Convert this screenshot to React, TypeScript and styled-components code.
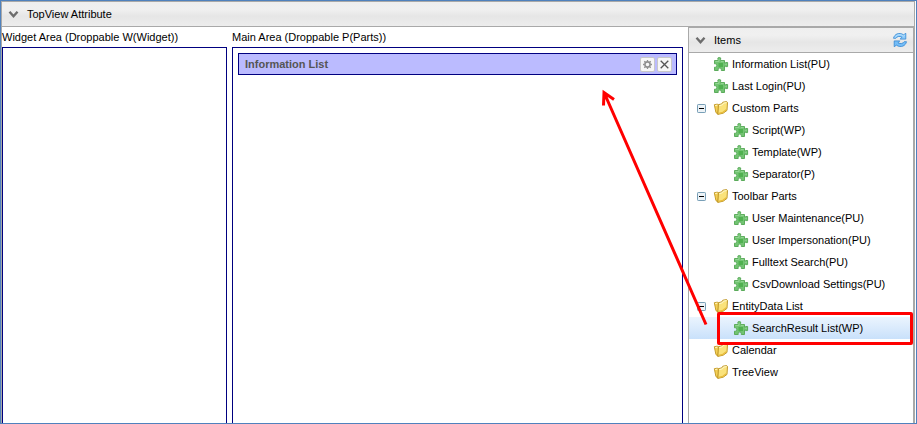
import React from 'react';
import styled, { createGlobalStyle } from 'styled-components';

const GlobalStyle = createGlobalStyle`
  * { box-sizing: border-box; }
  body { margin: 0; background: #fff; overflow: hidden; }
`;

const Screen = styled.div`
  position: relative;
  display: flex;
  flex-direction: column;
  width: 917px;
  height: 424px;
  overflow: hidden;
  border: 1px solid #4f81bd;
  background: #fff;
  font: 11px/14px 'Liberation Sans', Arial, sans-serif;
  color: #000;
`;

const Panel = styled.section`
  flex: 1;
  min-height: 0;
  display: flex;
  flex-direction: column;
  margin-right: 1px;
  border: 1px solid #a9a9a9;
  border-bottom: 0;
`;

const PanelHeader = styled.header`
  flex: none;
  display: flex;
  align-items: center;
  height: 25px;
  padding: 0 5px 0 6px;
  border-bottom: 1px solid #a9a9a9;
  background: linear-gradient(#efefef 0%, #f0f0f0 30%, #e6e6e6 60%, #ededed 100%);
`;

const Title = styled.span`
  flex: 1;
  margin-left: 8px;
`;

const Body = styled.div`
  flex: 1;
  min-height: 0;
  display: flex;
`;

const Area = styled.div<{ $width: number; $gap: number }>`
  display: flex;
  flex-direction: column;
  width: ${p => p.$width}px;
  margin-right: ${p => p.$gap}px;
  padding-top: 3px;
`;

const DropBox = styled.div`
  flex: 1;
  margin-top: 3px;
  padding: 5px;
  border: 1px solid #000080;
  border-bottom: 0;
`;

const Part = styled.div`
  display: flex;
  align-items: center;
  gap: 2px;
  height: 22px;
  padding: 0 4px 0 6px;
  border: 1px solid #000080;
  background: #bbbbff;
  color: #555;
  font-weight: bold;
`;

const PartName = styled.span`
  flex: 1;
`;

const IconButton = styled.button`
  display: grid;
  place-items: center;
  width: 15px;
  height: 15px;
  padding: 0;
  border: 1px solid #c8c8c8;
  border-radius: 2px;
  background: #f7f7f7;
`;

const ItemsPanel = styled.aside`
  display: flex;
  flex-direction: column;
  width: 226px;
  border: 1px solid #a9a9a9;
  border-bottom: 0;
`;

const Tree = styled.ul`
  margin: 0;
  padding: 0;
  list-style: none;
`;

const Row = styled.li<{ $depth: number; $selected?: boolean }>`
  display: flex;
  align-items: center;
  height: 22px;
  padding-left: ${p => 8 + p.$depth * 20}px;
  background: ${p => (p.$selected ? 'linear-gradient(#ebf4fe, #c9e1fb)' : 'none')};
`;

const ToggleSlot = styled.span`
  display: flex;
  width: 16px;
`;

const RowLabel = styled.span`
  margin-left: 3px;
  white-space: nowrap;
`;

const Highlight = styled.div`
  position: absolute;
  left: 716px;
  top: 311px;
  width: 196px;
  height: 33px;
  border: 3px solid #f00;
  border-radius: 2px;
`;

const Pointer = styled.svg`
  position: absolute;
  left: -1px;
  top: -1px;
  pointer-events: none;
`;

const Chevron = () => (
  <svg width="11" height="11" viewBox="0 0 11 11">
    <path d="M1.5 2.8 5.5 7.2 9.5 2.8" fill="none" stroke="#6c6c6c" strokeWidth="2.4" />
  </svg>
);

const Gear = () => (
  <svg width="11" height="11" viewBox="0 0 11 11" fill="none" stroke="#909090">
    <circle cx="5.5" cy="5.5" r="2.6" strokeWidth="1.6" />
    <path d="M5.5 1v1.5M5.5 8.5V10M1 5.5h1.5M8.5 5.5H10M2.3 2.3l1.1 1.1M7.6 7.6l1.1 1.1M8.7 2.3 7.6 3.4M3.4 7.6 2.3 8.7" strokeWidth="1.3" />
  </svg>
);

const Cross = () => (
  <svg width="11" height="11" viewBox="0 0 11 11">
    <path d="m1.7 1.7 7.6 7.6M9.3 1.7 1.7 9.3" stroke="#555" strokeWidth="1.3" />
  </svg>
);

const Puzzle = () => (
  <svg width="16" height="16" viewBox="0 0 16 16">
    <path
      d="M1.5 4.5H5V3.3Q4.2 1.5 6.3 1.5T7.6 3.3V4.5H11.5V7.4H12.6V6.5H14.6V10.6H12.6V9.8H11.5V14.5H8.3V13.4Q8.7 12 6.8 12T5.2 13.4V14.5H1.5V11.2H2.5Q3.8 11 3.8 9.5T2.5 7.8H1.5Z"
      fill="#72c472"
      stroke="#5bab5b"
    />
    <path d="M2.3 5.4H6V2.7M8 5.4h2.7M12.2 8.3h1.6" fill="none" stroke="#a0dda0" strokeWidth=".8" />
    <path d="M5.5 7H10v4H5.5Z" fill="#50b150" />
  </svg>
);

const Folder = () => (
  <svg width="16" height="16" viewBox="0 0 16 16" strokeLinejoin="round">
    <path d="M1.3 4.7 4.6 4.1 6 5.5 4.9 14.2 2.9 12.5Z" fill="#f3cf55" stroke="#c09520" strokeWidth=".9" />
    <path d="M5.4 4.7 9 3.8 9.8 2.2 13.6 1.6 14.5 2.4 14 10.4 10.2 13.2 4.9 14.4Z" fill="#fae27a" stroke="#b98e1e" strokeWidth=".9" />
    <path d="M6.3 5.6 9.6 4.7 10.4 3.1 13.5 2.6M2.2 5.5 4.4 5.1" stroke="#fffad2" fill="none" />
    <path d="M5.6 13.3 9.8 12.3 13.2 9.8" stroke="#e9bd3c" fill="none" strokeWidth="1.2" />
  </svg>
);

const Minus = () => (
  <svg width="9" height="9" viewBox="0 0 9 9">
    <rect x=".5" y=".5" width="8" height="8" rx=".7" fill="#edf3f7" stroke="#789fb7" />
    <path d="M2 4.5h5" stroke="#000" />
  </svg>
);

const Refresh = () => (
  <svg width="16" height="16" viewBox="0 0 16 16" strokeLinejoin="round">
    <path
      d="M1.5 6.3C2.3 2.2 7-.2 11.6 2.8L13.8 1.3V7.1H8.2L10 5.2C7.2 3.7 5 4.5 3.8 6.3Z"
      fill="#8dcbfa"
      stroke="#3486d2"
      strokeWidth=".8"
    />
    <path
      d="M14.5 9.7C13.7 13.8 9 16.2 4.4 13.2L2.2 14.7V8.9H7.8L6 10.8C8.8 12.3 11 11.5 12.2 9.7Z"
      fill="#74bdf7"
      stroke="#3486d2"
      strokeWidth=".8"
    />
    <path d="M3 5.3C5.2 2.3 8.5 2 11.5 4L13 2.8" fill="none" stroke="#c2e4fd" strokeWidth=".8" />
  </svg>
);

type Item = { label: string; depth: number; folder?: boolean; open?: boolean; selected?: boolean };

const items: Item[] = [
  { label: 'Information List(PU)', depth: 0 },
  { label: 'Last Login(PU)', depth: 0 },
  { label: 'Custom Parts', depth: 0, folder: true, open: true },
  { label: 'Script(WP)', depth: 1 },
  { label: 'Template(WP)', depth: 1 },
  { label: 'Separator(P)', depth: 1 },
  { label: 'Toolbar Parts', depth: 0, folder: true, open: true },
  { label: 'User Maintenance(PU)', depth: 1 },
  { label: 'User Impersonation(PU)', depth: 1 },
  { label: 'Fulltext Search(PU)', depth: 1 },
  { label: 'CsvDownload Settings(PU)', depth: 1 },
  { label: 'EntityData List', depth: 0, folder: true, open: true },
  { label: 'SearchResult List(WP)', depth: 1, selected: true },
  { label: 'Calendar', depth: 0, folder: true },
  { label: 'TreeView', depth: 0, folder: true },
];

export default function App() {
  return (
    <Screen>
      <GlobalStyle />
      <Panel>
        <PanelHeader>
          <Chevron />
          <Title>TopView Attribute</Title>
        </PanelHeader>
        <Body>
          <Area $width={225} $gap={5}>
            Widget Area (Droppable W(Widget))
            <DropBox />
          </Area>
          <Area $width={451} $gap={5}>
            Main Area (Droppable P(Parts))
            <DropBox>
              <Part>
                <PartName>Information List</PartName>
                <IconButton aria-label="Settings"><Gear /></IconButton>
                <IconButton aria-label="Remove"><Cross /></IconButton>
              </Part>
            </DropBox>
          </Area>
          <ItemsPanel>
            <PanelHeader>
              <Chevron />
              <Title>Items</Title>
              <Refresh />
            </PanelHeader>
            <Tree>
              {items.map(item => (
                <Row key={item.label} $depth={item.depth} $selected={item.selected}>
                  <ToggleSlot>{item.open && <Minus />}</ToggleSlot>
                  {item.folder ? <Folder /> : <Puzzle />}
                  <RowLabel>{item.label}</RowLabel>
                </Row>
              ))}
            </Tree>
          </ItemsPanel>
        </Body>
      </Panel>
      <Highlight />
      <Pointer width="917" height="424" viewBox="0 0 917 424" fill="none" stroke="#f00" strokeWidth="3">
        <path d="M706 324.5 604.5 93.5M603.5 105.5 604 92.5 614 99.5" />
      </Pointer>
    </Screen>
  );
}
